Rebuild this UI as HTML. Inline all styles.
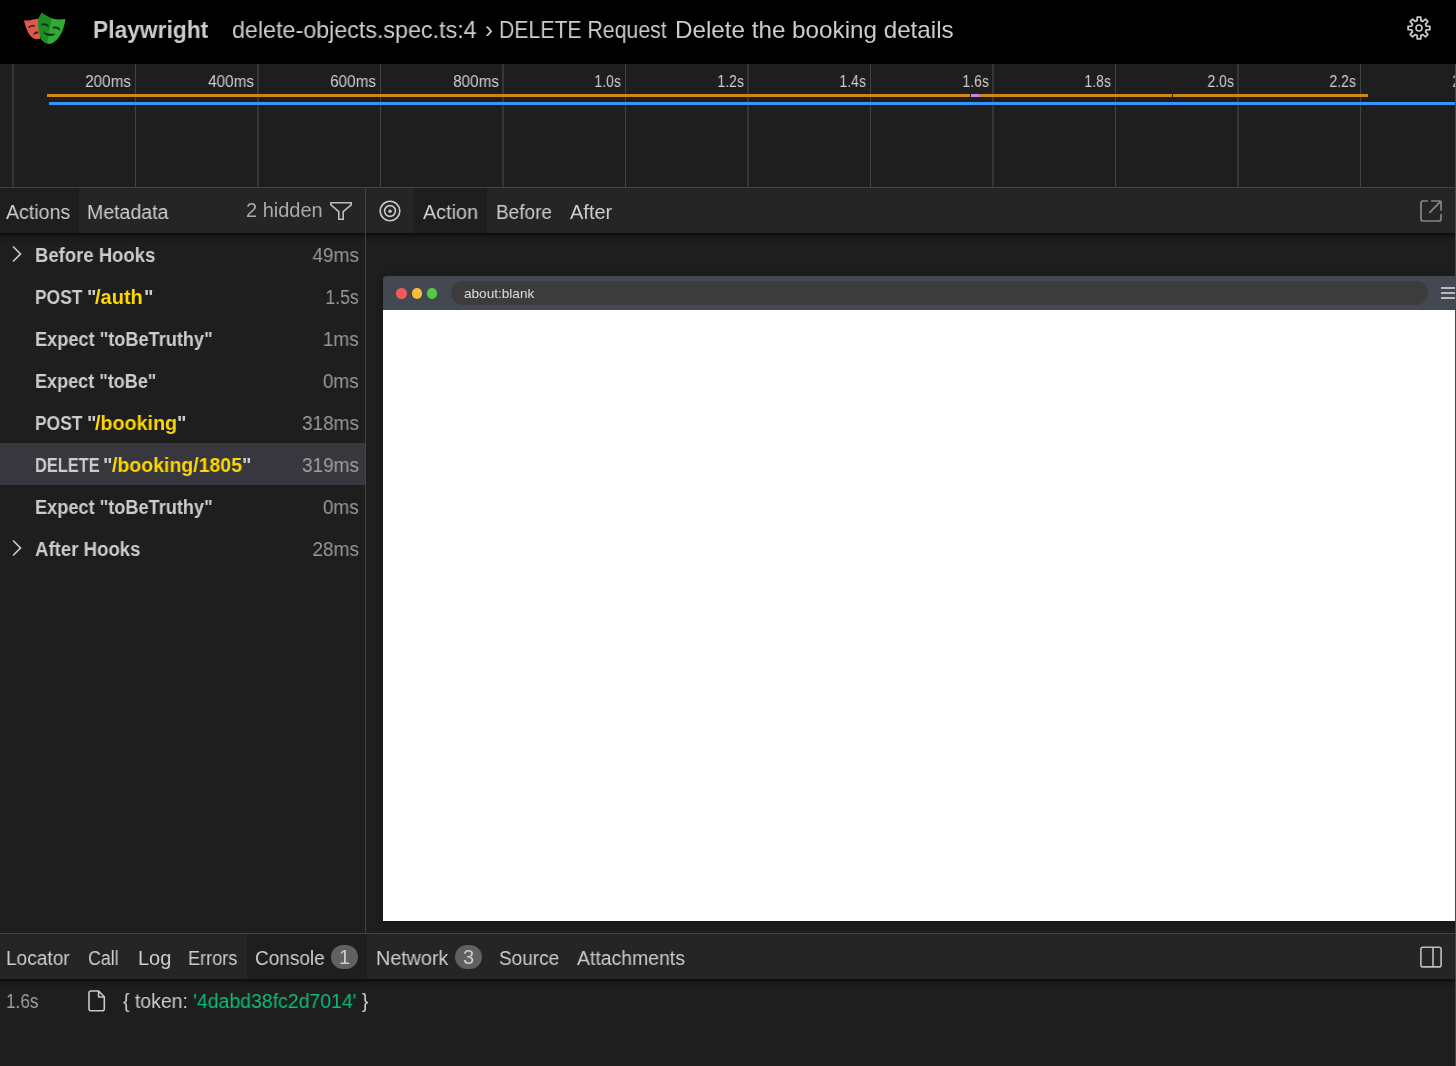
<!DOCTYPE html>
<html><head><meta charset="utf-8">
<style>
*{box-sizing:border-box;margin:0;padding:0}
html,body{width:1456px;height:1066px;overflow:hidden;background:#1e1e1e;font-family:"Liberation Sans",sans-serif;color:#cccccc}
.a{position:absolute}
.t{position:absolute;white-space:pre;line-height:1;transform-origin:0 0}
#hdr{left:0;top:0;width:1456px;height:64px;background:#000}
#tl{left:0;top:64px;width:1456px;height:123px;background:#1e1e1e}
.tick{position:absolute;top:0;width:1px;height:123px;background:#3c3c3c}
.tlab{position:absolute;top:10px;font-size:16px;line-height:1;color:#cccccc;white-space:pre;text-align:right;width:60px;transform-origin:100% 0}
.hline{position:absolute;height:1px;background:#434343}
.vline{position:absolute;width:1px;background:#434343}
.tabbar{position:absolute;background:#252526}
.row{position:absolute;left:0;width:365px;height:42px}
.rt{position:absolute;left:34.6px;top:12px;font-size:20px;font-weight:700;line-height:1;white-space:pre;color:#cccccc;transform-origin:0 0}
.rt b{color:#ffd700;font-weight:700}
.rd{position:absolute;right:6px;top:12px;font-size:20px;line-height:1;white-space:pre;color:rgba(204,204,204,0.7);transform-origin:100% 0;transform:scaleX(0.95)}
.tab{position:absolute;font-size:20px;line-height:1;white-space:pre;color:#cccccc;transform-origin:0 0}
.badge{position:absolute;width:27px;height:24px;border-radius:12px;background:#616161;color:#cccccc;font-size:20px;line-height:25px;text-align:center}
.t,.tab,.rt,.rd,.tlab,.badge{will-change:transform}
.shadow{position:absolute;height:11px;background:linear-gradient(rgba(8,8,8,0.85),rgba(20,20,20,0.45) 35%,rgba(30,30,30,0))}
</style></head><body>

<!-- HEADER -->
<div class="a" id="hdr">
  <svg class="a" style="left:15px;top:5px" width="60" height="50" viewBox="15 5 60 50">
    <path d="M24 20.2 C27 20.8 30 20.6 33 19.6 C35 19 37 18.6 39.2 18.4 L40.2 38.8 C38.5 39.2 36.5 39.4 35 39.1 C31 37.6 28.5 34 27 30 C25.5 26.5 24.5 23.2 24 20.2 Z" fill="#e2574c"/>
    <path d="M29 27.2 Q31.3 25.2 34.2 25.8" stroke="#1b2230" stroke-width="1.5" fill="none" stroke-linecap="round"/>
    <path d="M32.8 35.2 C33.5 32.8 35.5 31.4 37.6 31.2 L38.4 33.6 C36.6 33.4 34.8 34.1 32.8 35.2 Z" fill="#1b2230"/>
    <path d="M41.8 12.8 C44 15 48 17 52 18.5 C56 19.6 61 19.6 65.4 18.9 C64.6 26 62.6 32 59 37 C56.5 40.5 53.5 43.3 49.5 44.1 C46 43.6 43 41.6 41 39 C39 33 38 26.5 38 20.5 C39 17.5 40.5 15 41.8 12.8 Z" fill="#2ead33"/>
    <path d="M41.8 12.8 C44 15 48 17 51.8 18.5 C50 26 48.5 34 47.2 43.6 C45 43 43 41.6 41 39 C39 33 38 26.5 38 20.5 C39 17.5 40.5 15 41.8 12.8 Z" fill="#1d8d22"/>
    <path d="M42.2 24.6 Q45.5 23.4 48 26" stroke="#1b2230" stroke-width="1.7" fill="none" stroke-linecap="round"/>
    <path d="M53.4 27.6 Q56.8 26.6 59.4 29.4" stroke="#1b2230" stroke-width="1.7" fill="none" stroke-linecap="round"/>
    <path d="M42.4 31.0 C45 33.4 50 34.4 55.4 33.4 C52.5 37.4 45.5 37.2 42.4 31.0 Z" fill="#1b2230"/>
  </svg>
  <div class="t" id="pw" style="left:93px;top:18px;font-size:24px;font-weight:700;transform:scaleX(0.95)">Playwright</div>
  <div class="t" id="ttl" style="left:232px;top:18px;font-size:24px;transform:scaleX(0.97)">delete-objects.spec.ts:4</div>
  <div class="t" style="left:485px;top:18px;font-size:24px">›</div>
  <div class="t" style="left:499px;top:18px;font-size:24px;transform:scaleX(0.885)">DELETE Request</div>
  <div class="t" style="left:675px;top:18px;font-size:24px;transform:scaleX(1.009)">Delete the booking details</div>
  <svg class="a" style="left:1405px;top:14px" width="28" height="28" viewBox="0 0 28 28">
    <path id="gear" fill="none" stroke="#c8c8c8" stroke-width="1.8" stroke-linejoin="round" d="M12.03 6.66 L12.28 3.14 L15.72 3.14 L15.97 6.66 L17.80 7.42 L20.47 5.10 L22.90 7.53 L20.58 10.20 L21.34 12.03 L24.86 12.28 L24.86 15.72 L21.34 15.97 L20.58 17.80 L22.90 20.47 L20.47 22.90 L17.80 20.58 L15.97 21.34 L15.72 24.86 L12.28 24.86 L12.03 21.34 L10.20 20.58 L7.53 22.90 L5.10 20.47 L7.42 17.80 L6.66 15.97 L3.14 15.72 L3.14 12.28 L6.66 12.03 L7.42 10.20 L5.10 7.53 L7.53 5.10 L10.20 7.42 Z"/>
    <circle cx="14" cy="14" r="3.0" fill="none" stroke="#c8c8c8" stroke-width="1.6"/>
  </svg>
</div>

<!-- TIMELINE -->
<div class="a" id="tl">
  <div class="tick" style="left:12px;width:2px;background:#363636"></div>
  <div class="tick" style="left:135px;background:#424242"></div>
  <div class="tick" style="left:257px;width:2px;background:#363636"></div>
  <div class="tick" style="left:380px;background:#424242"></div>
  <div class="tick" style="left:502px;width:2px;background:#363636"></div>
  <div class="tick" style="left:625px;background:#424242"></div>
  <div class="tick" style="left:747px;width:2px;background:#363636"></div>
  <div class="tick" style="left:870px;background:#424242"></div>
  <div class="tick" style="left:992px;width:2px;background:#363636"></div>
  <div class="tick" style="left:1115px;background:#424242"></div>
  <div class="tick" style="left:1237px;width:2px;background:#363636"></div>
  <div class="tick" style="left:1360px;background:#424242"></div>
  <div class="tlab" style="left:71px;transform:scaleX(0.955)">200ms</div>
  <div class="tlab" style="left:194px;transform:scaleX(0.955)">400ms</div>
  <div class="tlab" style="left:316px;transform:scaleX(0.955)">600ms</div>
  <div class="tlab" style="left:439px;transform:scaleX(0.955)">800ms</div>
  <div class="tlab" style="left:561px;transform:scaleX(0.88)">1.0s</div>
  <div class="tlab" style="left:684px;transform:scaleX(0.88)">1.2s</div>
  <div class="tlab" style="left:806px;transform:scaleX(0.88)">1.4s</div>
  <div class="tlab" style="left:929px;transform:scaleX(0.88)">1.6s</div>
  <div class="tlab" style="left:1051px;transform:scaleX(0.88)">1.8s</div>
  <div class="tlab" style="left:1174px;transform:scaleX(0.88)">2.0s</div>
  <div class="tlab" style="left:1296px;transform:scaleX(0.88)">2.2s</div>
  <div class="tlab" style="left:1419px;transform:scaleX(0.88)">2.4s</div>
  <div class="a" style="left:47px;top:30px;width:923px;height:3px;background:#d18616"></div>
  <div class="a" style="left:971px;top:30px;width:8px;height:3px;background:#c586f0"></div>
  <div class="a" style="left:979px;top:30px;width:193px;height:3px;background:#d18616"></div>
  <div class="a" style="left:1173px;top:30px;width:195px;height:3px;background:#d18616"></div>
  <div class="a" style="left:49px;top:38px;width:1407px;height:3px;background:#3794ff"></div>
</div>
<div class="hline" style="left:0;top:187px;width:1456px"></div>

<!-- LEFT PANE -->
<div class="tabbar" style="left:0;top:188px;width:365px;height:45px"></div>
<div class="a" style="left:0;top:188px;width:79px;height:45px;background:#1e1e1e"></div>
<div class="tab" style="left:6px;top:202px;transform:scaleX(0.98)">Actions</div>
<div class="tab" style="left:87px;top:202px;transform:scaleX(0.977)">Metadata</div>
<div class="tab" style="left:246px;top:200px;color:#aaaaaa;transform:scaleX(1.0)">2 hidden</div>
<svg class="a" style="left:328px;top:200px" width="26" height="22" viewBox="0 0 26 22">
  <path d="M2.9 2.8 H23.2 V4.8 L15.2 11.6 V19.2 H10.8 V11.6 L2.9 4.8 Z" fill="none" stroke="#bdbdbd" stroke-width="1.6" stroke-linejoin="miter"/>
</svg>
<div class="shadow" style="left:0;top:233px;width:365px"></div>

<div class="row" style="top:233px">
  <svg class="a" style="left:10px;top:12px" width="14" height="18" viewBox="0 0 14 18"><path d="M3.5 2 L10.5 9 L3.5 16" fill="none" stroke="#c8c8c8" stroke-width="1.7" stroke-linecap="round"/></svg>
  <div class="rt" style="transform:scaleX(0.925)">Before Hooks</div><div class="rd">49ms</div></div>
<div class="row" style="top:275px"><div class="rt" style="transform:scaleX(0.87)">POST</div><div class="rt" style="left:87.3px">"</div><div class="rt" style="left:95.3px;color:#ffd700;transform:scaleX(1.0)">/auth</div><div class="rt" style="left:144.2px">"</div><div class="rd" style="transform:scaleX(0.885)">1.5s</div></div>
<div class="row" style="top:317px"><div class="rt" style="transform:scaleX(0.908)">Expect "toBeTruthy"</div><div class="rd">1ms</div></div>
<div class="row" style="top:359px"><div class="rt" style="transform:scaleX(0.902)">Expect "toBe"</div><div class="rd">0ms</div></div>
<div class="row" style="top:401px"><div class="rt" style="transform:scaleX(0.87)">POST</div><div class="rt" style="left:87.3px">"</div><div class="rt" style="left:95.3px;color:#ffd700;transform:scaleX(0.985)">/booking</div><div class="rt" style="left:176.6px">"</div><div class="rd">318ms</div></div>
<div class="row" style="top:443px;background:#37373d"><div class="rt" style="transform:scaleX(0.82)">DELETE</div><div class="rt" style="left:103.3px">"</div><div class="rt" style="left:111.8px;color:#ffd700;transform:scaleX(0.975)">/booking/1805</div><div class="rt" style="left:241.6px">"</div><div class="rd">319ms</div></div>
<div class="row" style="top:485px"><div class="rt" style="transform:scaleX(0.908)">Expect "toBeTruthy"</div><div class="rd">0ms</div></div>
<div class="row" style="top:527px">
  <svg class="a" style="left:10px;top:12px" width="14" height="18" viewBox="0 0 14 18"><path d="M3.5 2 L10.5 9 L3.5 16" fill="none" stroke="#c8c8c8" stroke-width="1.7" stroke-linecap="round"/></svg>
  <div class="rt" style="transform:scaleX(0.93)">After Hooks</div><div class="rd">28ms</div></div>

<div class="vline" style="left:365px;top:188px;height:745px"></div>

<!-- RIGHT PANE -->
<div class="tabbar" style="left:366px;top:188px;width:1090px;height:45px"></div>
<div class="a" style="left:414px;top:188px;width:73px;height:45px;background:#1e1e1e"></div>
<svg class="a" style="left:378px;top:199px" width="24" height="24" viewBox="0 0 24 24">
  <circle cx="12" cy="12" r="9.8" fill="none" stroke="#c8c8c8" stroke-width="1.6"/>
  <circle cx="12" cy="12" r="5.4" fill="none" stroke="#c8c8c8" stroke-width="1.6"/>
  <circle cx="12" cy="12.3" r="1.8" fill="#c4c4c4"/>
</svg>
<div class="tab" style="left:423px;top:202px;transform:scaleX(0.99)">Action</div>
<div class="tab" style="left:496px;top:202px;transform:scaleX(0.95)">Before</div>
<div class="tab" style="left:570px;top:202px;transform:scaleX(1.0)">After</div>
<svg class="a" style="left:1418px;top:198px" width="26" height="26" viewBox="0 0 26 26">
  <path d="M10 3 H5 Q3 3 3 5 V21 Q3 23 5 23 H21 Q23 23 23 21 V16" fill="none" stroke="#858585" stroke-width="1.7"/>
  <path d="M13 3 H22 Q23 3 23 4 V12.6" fill="none" stroke="#858585" stroke-width="1.7"/>
  <path d="M22.4 3.6 L11.8 14.3" fill="none" stroke="#858585" stroke-width="1.8" stroke-linecap="round"/>
</svg>
<div class="shadow" style="left:366px;top:233px;width:1090px"></div>

<!-- snapshot -->
<div class="a" style="left:383px;top:276px;width:1073px;height:645px;border-top-left-radius:4px;box-shadow:0 2px 9px 1px rgba(0,0,0,0.26)"></div>
<div class="a" style="left:383px;top:276px;width:1073px;height:34px;background:#444851;border-top-left-radius:4px"></div>
<div class="a" style="left:396.3px;top:288px;width:10.6px;height:10.6px;border-radius:50%;background:#f25b55"></div>
<div class="a" style="left:411.6px;top:288px;width:10.6px;height:10.6px;border-radius:50%;background:#f8bd3a"></div>
<div class="a" style="left:426.8px;top:288px;width:10.6px;height:10.6px;border-radius:50%;background:#56c943"></div>
<div class="a" style="left:451px;top:281px;width:977px;height:24px;border-radius:12px;background:#3c3c3c"></div>
<div class="t" style="left:463.5px;top:287px;font-size:13.6px;color:#dddddd;transform:scaleX(1.0)">about:blank</div>
<div class="a" style="left:1441px;top:287px;width:14px;height:2px;background:#bbbbbb"></div>
<div class="a" style="left:1441px;top:292px;width:14px;height:2px;background:#bbbbbb"></div>
<div class="a" style="left:1441px;top:297px;width:14px;height:2px;background:#bbbbbb"></div>
<div class="a" style="left:383px;top:310px;width:1073px;height:611px;background:#ffffff"></div>

<!-- BOTTOM -->
<div class="hline" style="left:0;top:933px;width:1456px"></div>
<div class="tabbar" style="left:0;top:934px;width:1456px;height:45px"></div>
<div class="a" style="left:247px;top:934px;width:120px;height:45px;background:#1e1e1e"></div>
<div class="tab" style="left:5.5px;top:947.5px;transform:scaleX(0.955)">Locator</div>
<div class="tab" style="left:88px;top:947.5px;transform:scaleX(0.89)">Call</div>
<div class="tab" style="left:137.5px;top:947.5px;transform:scaleX(0.99)">Log</div>
<div class="tab" style="left:188px;top:947.5px;transform:scaleX(0.905)">Errors</div>
<div class="tab" style="left:255px;top:947.5px;transform:scaleX(0.95)">Console</div>
<div class="badge" style="left:331px;top:945px">1</div>
<div class="tab" style="left:376px;top:947.5px;transform:scaleX(0.987)">Network</div>
<div class="badge" style="left:455px;top:945px">3</div>
<div class="tab" style="left:499px;top:947.5px;transform:scaleX(0.95)">Source</div>
<div class="tab" style="left:577px;top:947.5px;transform:scaleX(0.971)">Attachments</div>
<svg class="a" style="left:1418px;top:944px" width="26" height="26" viewBox="0 0 26 26">
  <rect x="2.9" y="3.3" width="20.2" height="19.6" rx="2" fill="none" stroke="#bdbdbd" stroke-width="1.6"/>
  <path d="M15 3.3 V22.9" stroke="#bdbdbd" stroke-width="1.6"/>
</svg>
<div class="shadow" style="left:0;top:979px;width:1456px"></div>

<div class="t" style="left:6px;top:991px;font-size:20px;color:#a0a0a0;transform:scaleX(0.86)">1.6s</div>
<svg class="a" style="left:86px;top:988px" width="22" height="26" viewBox="0 0 22 26">
  <path d="M5 3 H12.6 L18.3 8.8 V20.8 Q18.3 22.8 16.3 22.8 H5 Q3 22.8 3 20.8 V5 Q3 3 5 3 Z M12.6 3 V9 H18.3" fill="none" stroke="#c8c8c8" stroke-width="1.6" stroke-linejoin="round"/>
</svg>
<div class="t" style="left:123px;top:991px;font-size:20px;transform:scaleX(0.972)">{ token: <span style="color:#0dbc79">'4dabd38fc2d7014'</span> }</div>

<div class="vline" style="left:1455px;top:64px;height:1002px;background:#474747"></div>
</body></html>
